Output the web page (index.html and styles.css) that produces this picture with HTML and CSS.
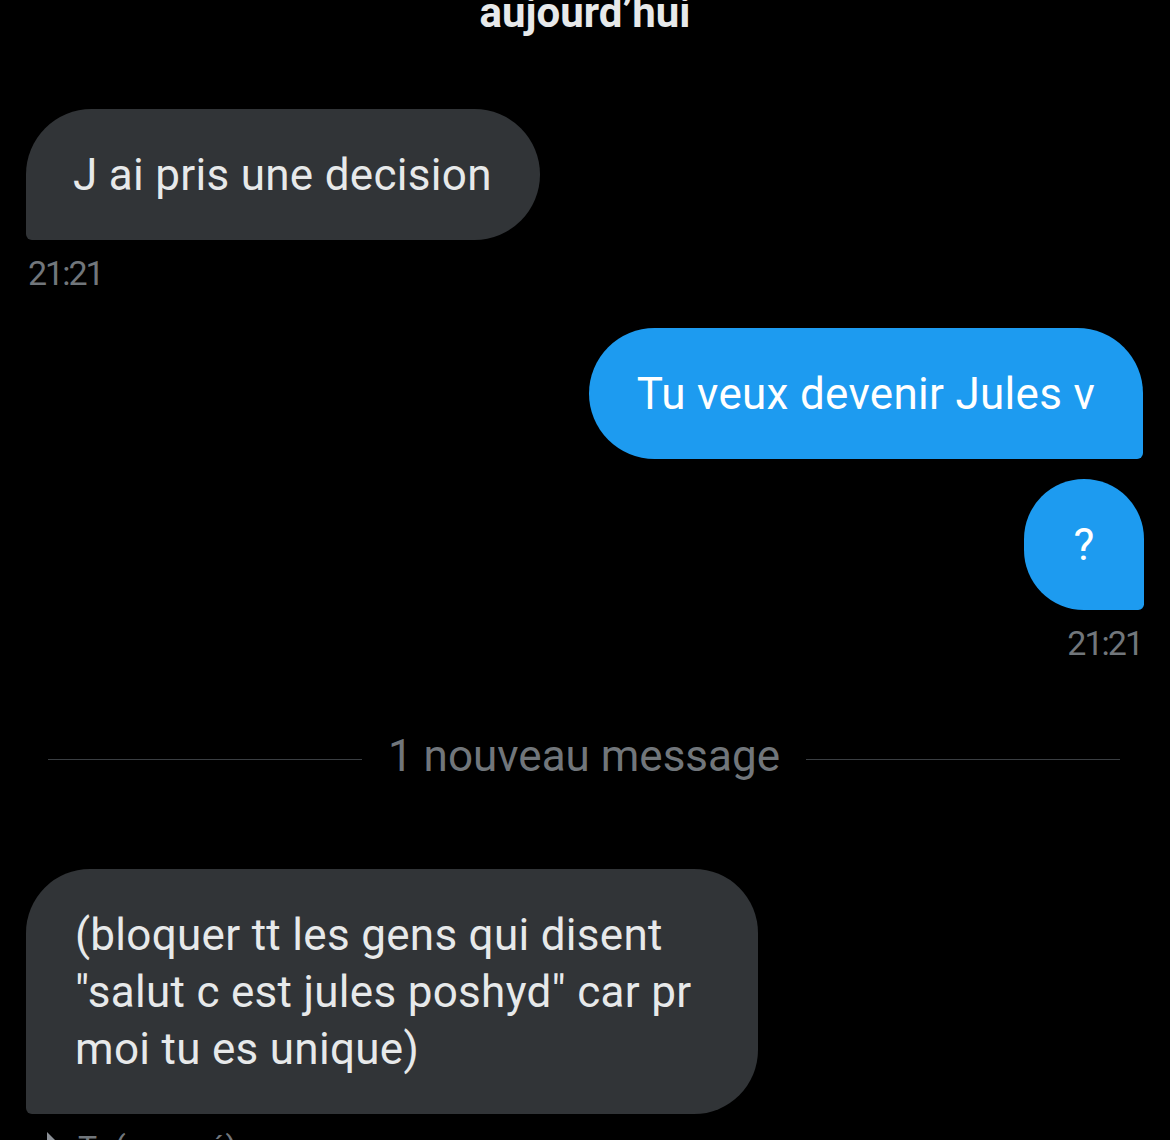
FILE: index.html
```html
<!DOCTYPE html>
<html lang="fr">
<head>
<meta charset="utf-8">
<title>Messages</title>
<link rel="stylesheet" href="styles.css">
</head>
<body>
<main class="thread">
  <div class="day">aujourd’hui</div>

  <section class="group group-in first">
    <div class="bubble bubble-in">J ai pris une decision</div>
    <div class="time">21:21</div>
  </section>

  <section class="group group-out">
    <div class="bubble bubble-out">Tu veux devenir Jules v</div>
    <div class="bubble bubble-out bubble-short">?</div>
    <div class="time">21:21</div>
  </section>

  <div class="divider">
    <span class="divider-line"></span>
    <span class="divider-text">1 nouveau message</span>
    <span class="divider-line"></span>
  </div>

  <section class="group group-in last">
    <div class="bubble bubble-in bubble-wide">(bloquer tt les gens qui disent<br>"salut c est jules poshyd" car pr<br>moi tu es unique)</div>
    <div class="meta">
      <svg class="meta-icon" width="12" height="16" viewBox="0 0 12 16"><path d="M1 0 L11 10 L1 10 Z" fill="#8b9096"/></svg>
      <span class="meta-text">Tr (envoyé)</span>
    </div>
  </section>
</main>
</body>
</html>
```

FILE: styles.css
```css
html, body {
  margin: 0;
  padding: 0;
  background: #000;
}

body {
  font-family: Roboto, "Noto Sans", "Liberation Sans", sans-serif;
  color: #e7e9ea;
  overflow: hidden;
  height: 1140px;
}

.thread {
  display: flex;
  flex-direction: column;
  padding: 0 28px 0 26px;
}

.day {
  align-self: center;
  margin-top: -5px;
  font-size: 42px;
  line-height: 36px;
  font-weight: 700;
  color: #e7e9ea;
  margin-left: 2px;
}

.group {
  display: flex;
  flex-direction: column;
  gap: 20px;
}

.group-in {
  align-items: flex-start;
}

.group-out {
  align-items: flex-end;
  margin-top: 38px;
}

.group-in.first {
  margin-top: 78px;
}

.bubble {
  font-size: 44px;
  line-height: 57px;
  letter-spacing: 0.3px;
  padding: 38px 48px 36px;
  border-radius: 66px;
  box-sizing: border-box;
}

.bubble-in {
  background: #313437;
  color: #e7e9ea;
  border-bottom-left-radius: 6px;
  padding-left: 47px;
}

.bubble-out {
  background: #1d9bf0;
  color: #fff;
  border-bottom-right-radius: 6px;
  margin-right: -1px;
}

.bubble-short {
  width: 120px;
  padding-left: 0;
  padding-right: 0;
  text-align: center;
  border-radius: 62px;
  border-bottom-right-radius: 6px;
  margin-right: -2px;
}

.bubble-wide {
  width: 732px;
  padding-left: 49px;
  border-radius: 64px;
  border-bottom-left-radius: 6px;
}

.time {
  font-size: 34px;
  line-height: 34px;
  letter-spacing: -2px;
  color: #71767b;
  margin-top: -4px;
  padding: 0 0 0 2px;
}

.divider {
  display: flex;
  align-items: center;
  gap: 26px;
  margin: 74px 22px 0 22px;
  height: 50px;
}

.divider-line {
  flex: 1;
  height: 1px;
  background: #3a3e42;
}

.divider-text {
  font-size: 44px;
  line-height: 50px;
  color: #71767b;
  margin-bottom: 6px;
}

.group-in.last {
  margin-top: 85px;
  gap: 0;
}

.meta {
  display: flex;
  align-items: flex-start;
  gap: 20px;
  margin-top: 16px;
  padding-left: 20px;
}

.meta-icon {
  margin-top: 2px;
}

.meta-text {
  font-size: 32px;
  line-height: 34px;
  color: #71767b;
}
```
